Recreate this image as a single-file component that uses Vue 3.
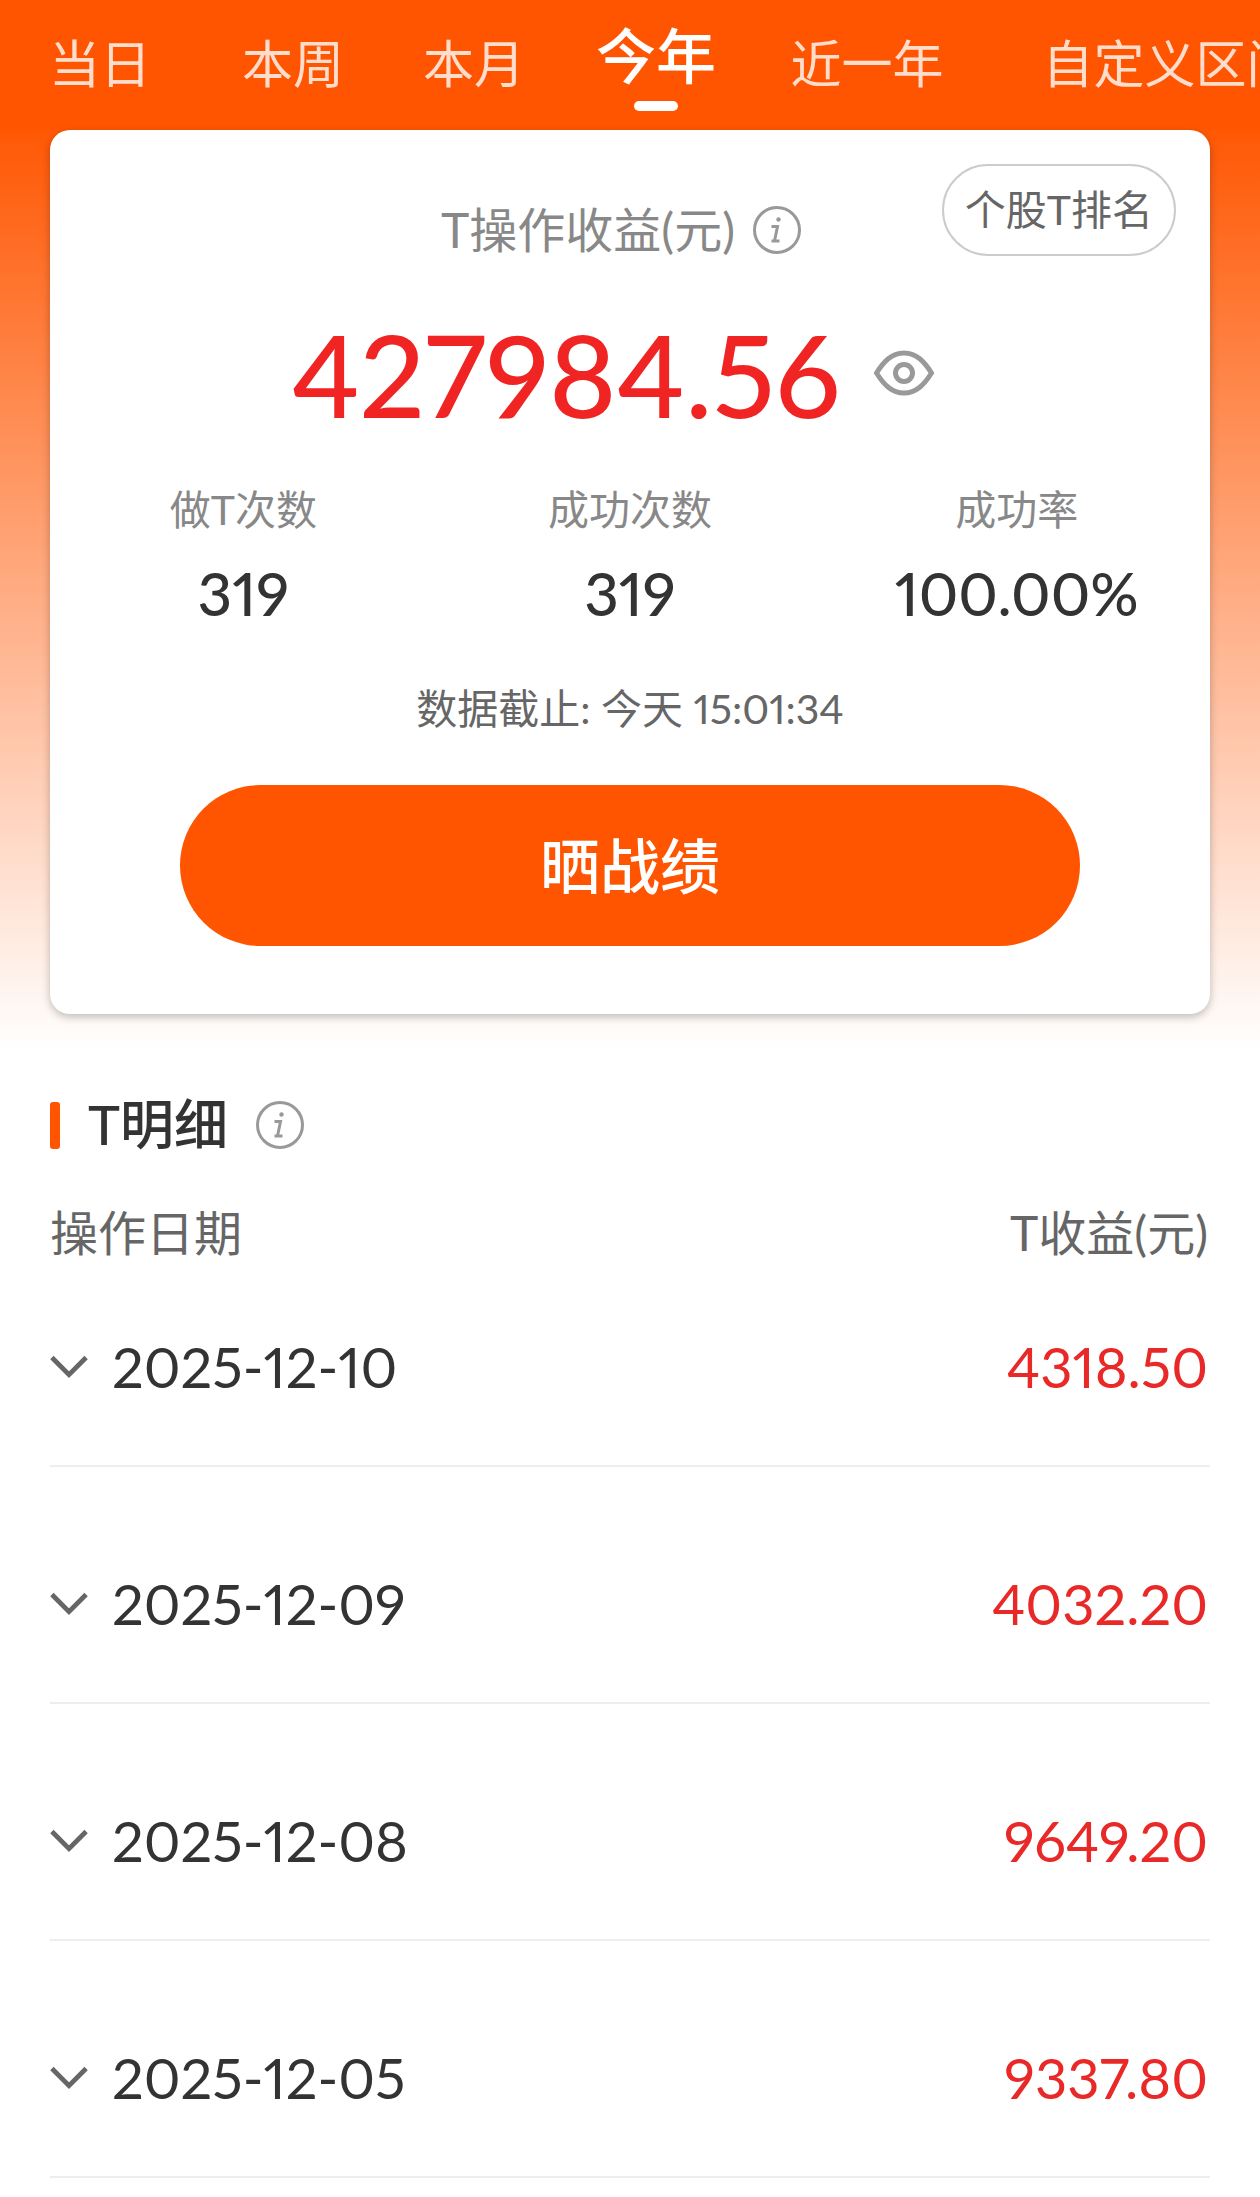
<script setup>
import { ref } from 'vue'

const tabs = ['当日', '本周', '本月', '今年', '近一年', '自定义区间']
const activeTab = ref('今年')
const showAmount = ref(true)

const stats = [
  { label: '做T次数', value: '319' },
  { label: '成功次数', value: '319' },
  { label: '成功率', value: '100.00%' }
]

const records = ref([
  { date: '2025-12-10', profit: '4318.50', open: false },
  { date: '2025-12-09', profit: '4032.20', open: false },
  { date: '2025-12-08', profit: '9649.20', open: false },
  { date: '2025-12-05', profit: '9337.80', open: false }
])

const toggle = (item) => {
  item.open = !item.open
}
</script>

<template>
  <div class="page">
    <nav class="tabs">
      <button
        v-for="tab in tabs"
        :key="tab"
        type="button"
        class="tab"
        :class="{ active: tab === activeTab }"
        @click="activeTab = tab"
      >
        {{ tab }}
      </button>
    </nav>

    <section class="card">
      <div class="card-head">
        <div class="card-title">
          <span>T操作收益(元)</span>
          <button type="button" class="icon-btn" aria-label="收益说明">
            <svg class="info" viewBox="0 0 48 48">
              <circle cx="24" cy="24" r="22.5" />
              <path d="M18.5 20.5h6l-3 14.5M18.5 35h8" />
              <circle class="dot" cx="25.5" cy="13.5" r="2.2" />
            </svg>
          </button>
        </div>
        <button type="button" class="rank-btn">个股T排名</button>
      </div>

      <div class="total">
        <span class="amount">{{ showAmount ? '427984.56' : '******' }}</span>
        <button type="button" class="eye-btn" aria-label="显示或隐藏金额" @click="showAmount = !showAmount">
          <svg class="eye" viewBox="0 0 60 46">
            <path d="M2.5 23C10 11 18 3 30 3s20 8 27.5 20C50 35 42 43 30 43S10 35 2.5 23z" />
            <circle cx="30" cy="23" r="8.5" />
          </svg>
        </button>
      </div>

      <dl class="stats">
        <div v-for="stat in stats" :key="stat.label" class="stat">
          <dt>{{ stat.label }}</dt>
          <dd>{{ stat.value }}</dd>
        </div>
      </dl>

      <p class="deadline">数据截止: 今天 15:01:34</p>
      <button type="button" class="share-btn">晒战绩</button>
    </section>

    <section class="details">
      <h2 class="details-title">
        <span class="bar"></span>
        <span>T明细</span>
        <button type="button" class="icon-btn" aria-label="明细说明">
          <svg class="info" viewBox="0 0 48 48">
            <circle cx="24" cy="24" r="22.5" />
            <path d="M18.5 20.5h6l-3 14.5M18.5 35h8" />
            <circle class="dot" cx="25.5" cy="13.5" r="2.2" />
          </svg>
        </button>
      </h2>

      <table>
        <thead>
          <tr>
            <th>操作日期</th>
            <th class="right">T收益(元)</th>
          </tr>
        </thead>
        <tbody>
          <tr v-for="item in records" :key="item.date">
            <td>
              <button type="button" class="row-btn" :aria-expanded="item.open" @click="toggle(item)">
                <svg class="chevron" :class="{ open: item.open }" viewBox="0 0 40 24">
                  <path d="M2 2l18 18L38 2" />
                </svg>
                {{ item.date }}
              </button>
            </td>
            <td class="right profit">{{ item.profit }}</td>
          </tr>
        </tbody>
      </table>
    </section>
  </div>
</template>

<style>
body {
  margin: 0;
  background: #fff;
}
</style>

<style scoped>
.page {
  min-height: 100vh;
  font-family: Lato, "Noto Sans CJK SC", sans-serif;
  font-variant-numeric: proportional-nums;
  line-height: 60px;
  color: #333;
  background: linear-gradient(#ff5500 113px, #fff 1050px);
}

button {
  padding: 0;
  border: none;
  background: none;
  font: inherit;
  color: inherit;
  cursor: pointer;
}

svg {
  display: block;
  fill: none;
}

.tabs {
  display: grid;
  grid-template-columns: 200px 186px 176px 188px 234px 372px;
  height: 129px;
  overflow: hidden;
  background: #ff5500;
}

.tab {
  display: flex;
  flex-direction: column;
  align-items: center;
  padding-top: 34px;
  font-size: 51px;
  white-space: nowrap;
  color: #ffddcc;
}

.tab.active {
  padding-top: 26px;
  font-size: 60px;
  font-weight: 500;
  color: #fff;
}

.tab.active::after {
  content: "";
  width: 44px;
  height: 10px;
  margin-top: 15px;
  border-radius: 5px;
  background: #fff;
}

.card {
  margin: 1px 50px 0;
  padding: 34px 0 68px;
  border-radius: 20px;
  background: #fff;
  box-shadow: 0 3px 8px rgba(0, 0, 0, 0.25);
}

.card-head {
  display: grid;
  grid-template-columns: 1fr auto 1fr;
  align-items: start;
  padding: 0 34px;
}

.card-title {
  display: flex;
  align-items: center;
  grid-column: 2;
  margin-top: 36px;
  font-size: 48px;
  color: #888;
}

.icon-btn {
  padding: 0 18px;
}

.info {
  width: 48px;
  height: 48px;
  stroke: #999;
  stroke-width: 3;
}

.info .dot {
  fill: #999;
  stroke: none;
}

.rank-btn {
  justify-self: end;
  height: 92px;
  padding: 0 21px;
  border: 2px solid #ccc;
  border-radius: 46px;
  font-size: 41px;
  color: #666;
}

.total {
  display: flex;
  align-items: center;
  justify-content: center;
  margin-top: 53px;
}

.amount {
  font-size: 115px;
  font-weight: 500;
  line-height: 120px;
  color: #f12424;
}

.eye-btn {
  padding: 0 34px;
}

.eye {
  width: 60px;
  height: 46px;
  stroke: #999;
  stroke-width: 5;
}

.stats {
  display: grid;
  grid-template-columns: repeat(3, 1fr);
  margin: 47px 0 0;
  text-align: center;
}

.stat dt {
  font-size: 41px;
  color: #888;
}

.stat dd {
  margin: 23px 0 0;
  font-size: 60px;
  font-weight: 500;
}

.deadline {
  margin: 56px 0 46px;
  font-size: 41px;
  text-align: center;
  color: #666;
}

.share-btn {
  display: block;
  width: calc(100% - 260px);
  height: 161px;
  margin: 0 auto;
  border-radius: 81px;
  background: #ff5500;
  font-size: 60px;
  font-weight: 500;
  color: #fff;
}

.details {
  padding: 81px 50px 18px;
}

.details-title {
  display: flex;
  align-items: center;
  margin: 0 0 48px;
  font-size: 54px;
  font-weight: 500;
}

.bar {
  width: 10px;
  height: 47px;
  margin-right: 28px;
  border-radius: 3px;
  background: #ff5500;
}

.details-title .icon-btn {
  padding: 0 28px;
}

table {
  width: 100%;
  border-collapse: collapse;
}

th {
  padding: 0 0 74px;
  font-size: 48px;
  font-weight: 400;
  text-align: left;
  color: #666;
}

td {
  padding: 107px 0 68px;
  border-bottom: 2px solid #eee;
  font-size: 56px;
}

tbody tr:first-child td {
  padding-top: 0;
}

.right {
  padding-right: 2px;
  text-align: right;
}

.profit {
  color: #e92828;
}

.row-btn {
  display: flex;
  align-items: center;
  gap: 24px;
}

.chevron {
  width: 38px;
  height: 24px;
  stroke: #666;
  stroke-width: 5;
}

.chevron.open {
  transform: rotate(180deg);
}
</style>
